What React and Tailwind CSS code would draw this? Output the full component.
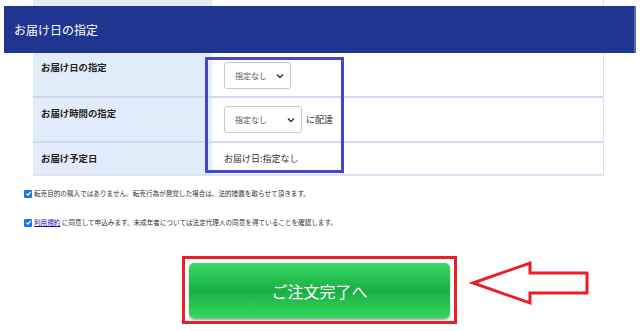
import React from 'react';

const jp = { fontFamily: '"Noto Sans CJK JP", "Noto Sans", sans-serif' };

function Chevron() {
  return (
    <svg width="8" height="6" viewBox="0 0 8 6" className="text-[#333]">
      <path d="M1 1.5 L4 4.5 L7 1.5" fill="none" stroke="currentColor" strokeWidth="1.4" />
    </svg>
  );
}

function FakeSelect({ width }) {
  return (
    <div
      className={`${width} h-[27px] border border-[#c9c9c9] rounded-[3px] bg-white flex items-center justify-between pl-[10px] pr-[6px] text-[8px] text-[#555]`}
    >
      <span>指定なし</span>
      <Chevron />
    </div>
  );
}

function Check() {
  return (
    <span className="w-[8px] h-[8px] rounded-[1px] bg-[#1a73e8] flex items-center justify-center shrink-0">
      <svg width="7" height="7" viewBox="0 0 10 10">
        <path d="M2 5.2 L4.2 7.4 L8.2 2.6" fill="none" stroke="white" strokeWidth="1.8" />
      </svg>
    </span>
  );
}

export default function App() {
  return (
    <div className="w-[640px] h-[331px] bg-white relative overflow-hidden" style={jp}>
      {/* table top peeking above header */}
      <div className="ml-[33px] w-[571px] h-[6px] flex border-r border-[#d6e2f4]">
        <div className="w-[179px] bg-[#e2edfb] border-r border-[#d6e2f4]" />
      </div>

      {/* Header */}
      <div className="mx-[4px] h-[47px] bg-[#20358f] border-r-2 border-[#5a6ab8] flex items-center pl-[10px] text-white text-[12px]">
        お届け日の指定
      </div>

      {/* Table */}
      <div className="ml-[33px] w-[571px] border-r border-[#d6e2f4] border-b-2 border-b-[#dbe5f3] text-[#222]">
        <div className="flex h-[45px] border-b-2 border-[#cfdcef]">
          <div className="w-[179px] bg-[#e2edfb] pl-[8px] pt-[7px] text-[9.4px] font-bold">お届け日の指定</div>
          <div className="flex-1 pl-[12px] pt-[9px]">
            <FakeSelect width="w-[67px]" />
          </div>
        </div>
        <div className="flex h-[45px] border-b-2 border-[#cfdcef]">
          <div className="w-[179px] bg-[#e2edfb] pl-[8px] pt-[8px] text-[9.4px] font-bold">お届け時間の指定</div>
          <div className="flex-1 pl-[12px] pt-[8px] flex items-start gap-[4px]">
            <FakeSelect width="w-[78px]" />
            <span className="text-[9px] leading-[27px] text-[#333]">に配達</span>
          </div>
        </div>
        <div className="flex h-[31px]">
          <div className="w-[179px] bg-[#e2edfb] pl-[8px] flex items-center text-[9.4px] font-bold">お届け予定日</div>
          <div className="flex-1 pl-[12px] flex items-center text-[9px] text-[#333]">お届け日:指定なし</div>
        </div>
      </div>

      {/* Agreements */}
      <div className="mt-[11px] pl-[24px] text-[6.6px] text-[#333]">
        <div className="h-[13px] flex items-center gap-[2px]">
          <Check />
          <span>転売目的の購入ではありません。転売行為が発覚した場合は、法的措置を取らせて頂きます。</span>
        </div>
        <div className="h-[13px] mt-[16px] flex items-center gap-[2px]">
          <Check />
          <span>
            <span className="text-[#1a0dab] underline">利用規約</span> に同意して申込みます。未成年者については法定代理人の同意を得ていることを確認します。
          </span>
        </div>
      </div>

      {/* Submit */}
      <div className="mt-[34px] ml-[189px]">
        <button className="w-[261px] h-[55px] rounded-[5px] bg-gradient-to-b from-[#36db62] via-[#1aae45] to-[#32d85e] shadow-[0_2px_2px_rgba(0,0,0,0.35)] text-white text-[16px] flex items-center justify-center">
          ご注文完了へ
        </button>
      </div>

      {/* annotations */}
      <div className="absolute left-[205px] top-[57px] w-[139px] h-[116px] border-[3px] border-[#4646cc]" />
      <div className="absolute left-[182px] top-[256px] w-[275px] h-[68px] border-[3px] border-[#e8202a]" />
      <svg className="absolute left-0 top-0" width="640" height="331">
        <polygon
          points="473,283 530,263 530,273 587,273 587,293 530,293 530,303"
          fill="none"
          stroke="#e8202a"
          strokeWidth="3"
        />
      </svg>
    </div>
  );
}
